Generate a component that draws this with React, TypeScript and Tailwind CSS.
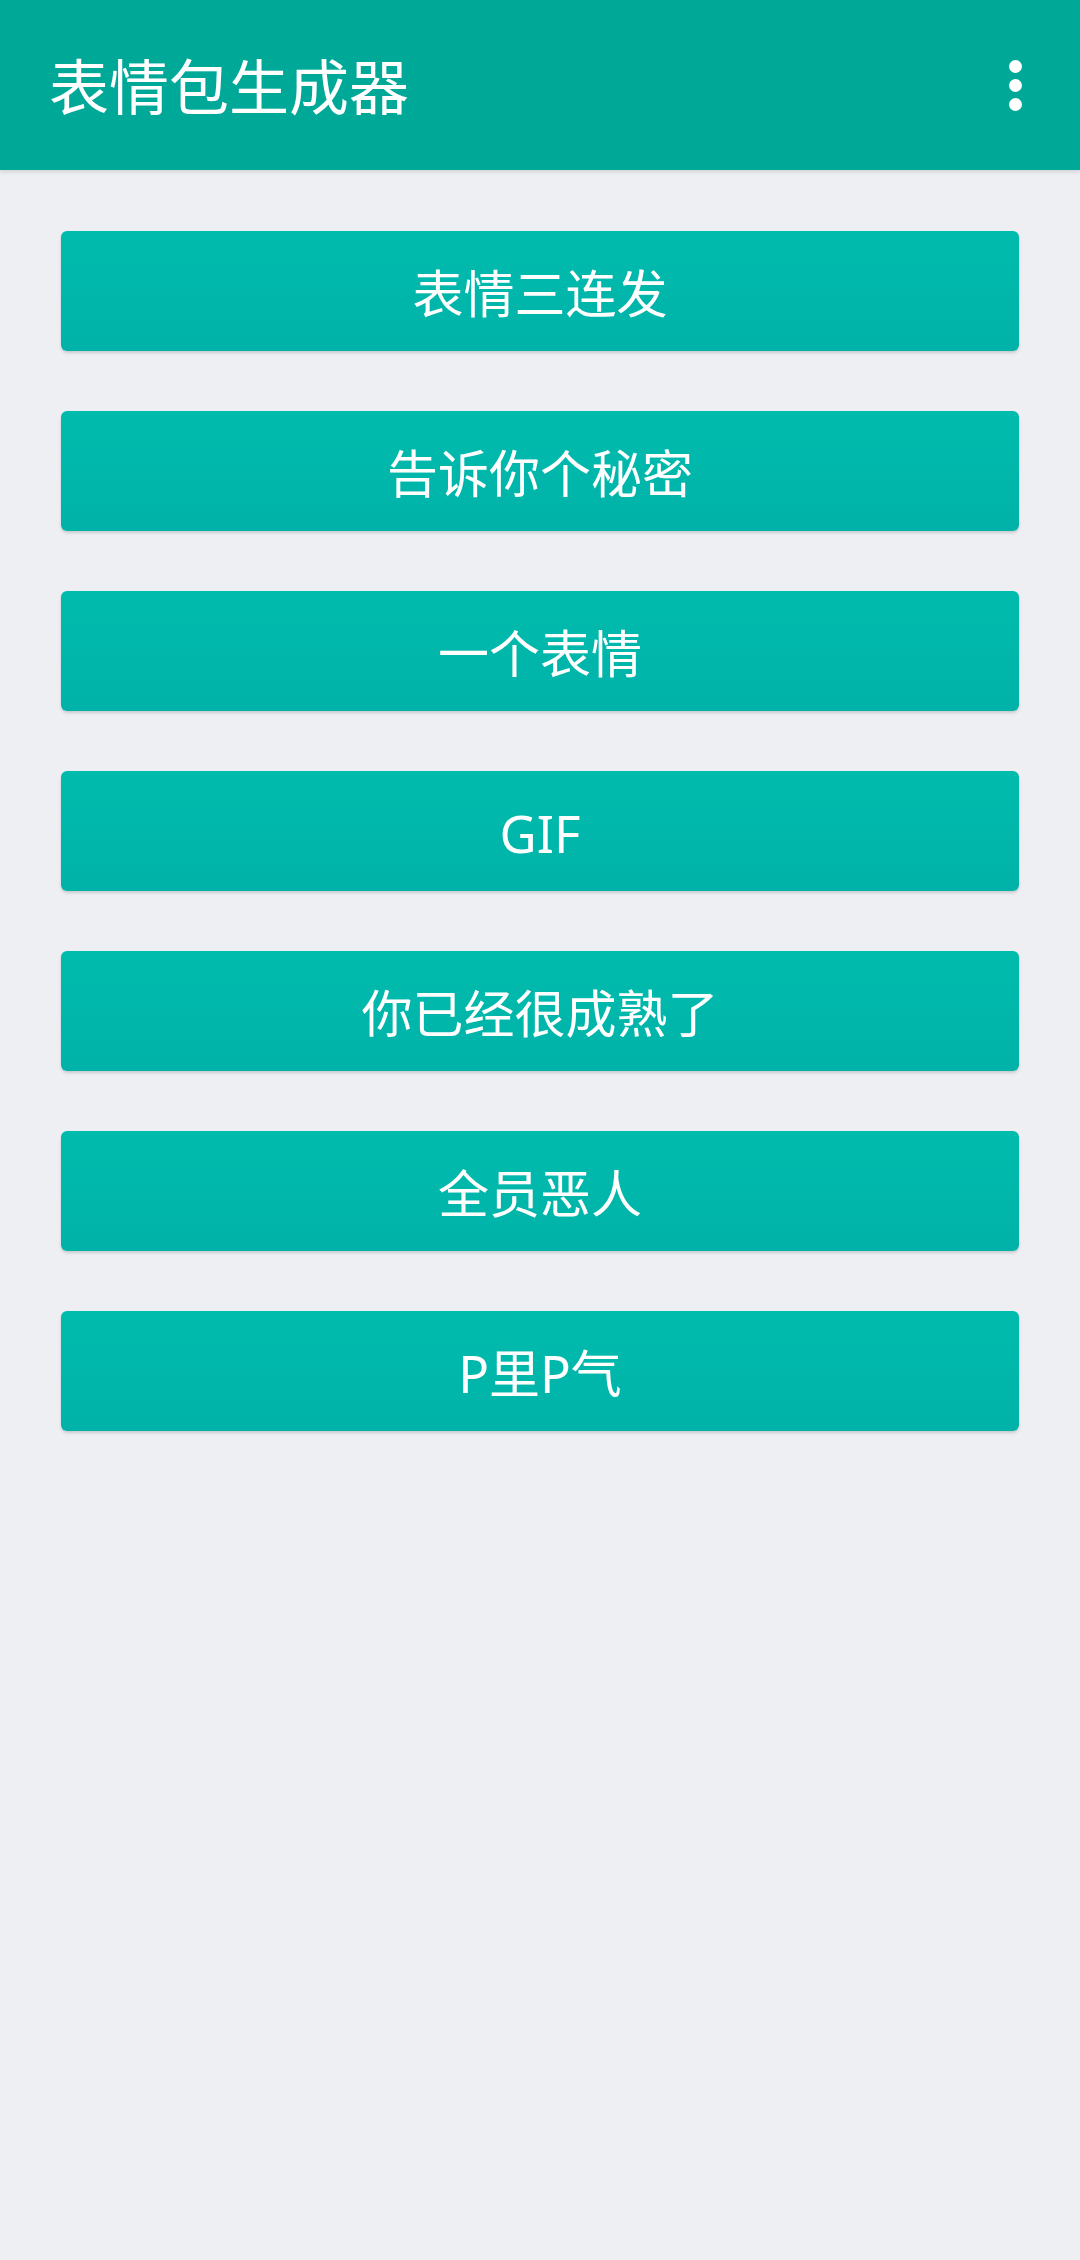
const items = ['表情三连发', '告诉你个秘密', '一个表情', 'GIF', '你已经很成熟了', '全员恶人', 'P里P气']

export default function App() {
  return (
    <div
      className="min-h-[2260px] w-[1080px] bg-[#eeeff2]"
      style={{ fontFamily: '"Noto Sans", "Noto Sans CJK SC", sans-serif' }}
    >
      <header className="flex h-[170px] items-center justify-between bg-[#00a898] pl-[49px] pr-[58px] shadow-[0_2px_4px_rgba(0,0,0,0.12)]">
        <h1 className="pt-[4px] text-[60px] leading-none text-white">表情包生成器</h1>
        <div className="flex flex-col items-center gap-[6px]">
          <span className="h-[13px] w-[13px] rounded-full bg-white" />
          <span className="h-[13px] w-[13px] rounded-full bg-white" />
          <span className="h-[13px] w-[13px] rounded-full bg-white" />
        </div>
      </header>

      <main className="flex flex-col gap-[60px] px-[61px] pt-[61px]">
        {items.map((label) => (
          <button
            key={label}
            className="flex h-[120px] w-full items-center justify-center rounded-[6px] bg-gradient-to-b from-[#00bcad] to-[#00b2a8] pt-[4px] text-[51px] text-white shadow-[0_2px_3px_rgba(0,0,0,0.15)]"
          >
            {label}
          </button>
        ))}
      </main>
    </div>
  )
}
